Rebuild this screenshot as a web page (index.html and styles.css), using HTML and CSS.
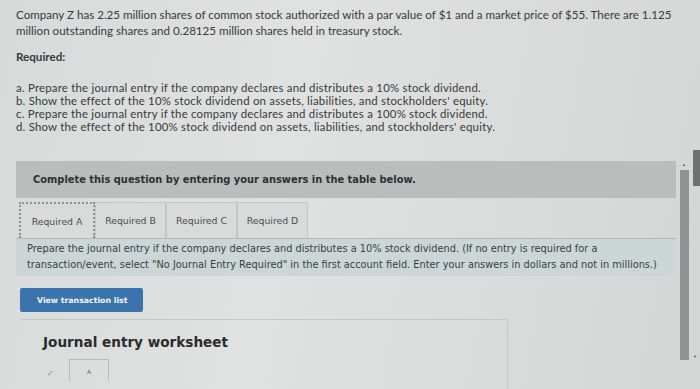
FILE: index.html
```html
<!DOCTYPE html>
<html>
<head>
<meta charset="utf-8">
<link rel="stylesheet" href="styles.css">
</head>
<body>
<div class="page">
  <div class="question">
    <p class="intro">Company Z has 2.25 million shares of common stock authorized with a par value of $1 and a market price of $55. There are 1.125 million outstanding shares and 0.28125 million shares held in treasury stock.</p>
    <p class="required">Required:</p>
    <ol class="parts">
      <li>a. Prepare the journal entry if the company declares and distributes a 10% stock dividend.</li>
      <li>b. Show the effect of the 10% stock dividend on assets, liabilities, and stockholders' equity.</li>
      <li>c. Prepare the journal entry if the company declares and distributes a 100% stock dividend.</li>
      <li>d. Show the effect of the 100% stock dividend on assets, liabilities, and stockholders' equity.</li>
    </ol>
  </div>
  <div class="work">
    <div class="banner">Complete this question by entering your answers in the table below.</div>
    <div class="tabs">
      <div class="tab active">Required A</div>
      <div class="tab">Required B</div>
      <div class="tab">Required C</div>
      <div class="tab">Required D</div>
    </div>
    <div class="instructions">Prepare the journal entry if the company declares and distributes a 10% stock dividend. (If no entry is required for a transaction/event, select "No Journal Entry Required" in the first account field. Enter your answers in dollars and not in millions.)</div>
    <button class="btn">View transaction list</button>
    <div class="worksheet">
      <h2 class="ws-title">Journal entry worksheet</h2>
      <div class="ws-row">
        <span class="check">✓</span>
        <div class="ws-tab">A</div>
      </div>
    </div>
  </div>
  <div class="scrollbar">
    <span class="arrow up">▲</span>
    <div class="thumb"></div>
    <span class="arrow down">▼</span>
  </div>
  <div class="edge"></div>
</div>
</body>
</html>
```
FILE: styles.css
```css
html, body {
  margin: 0;
  padding: 0;
}
body {
  width: 700px;
  height: 389px;
  overflow: hidden;
  background: linear-gradient(100deg, #d6dad9 0%, #dfe2e1 40%, #d9dcdb 70%, #d3d6d5 100%);
  color: #383a3b;
}
.page {
  position: relative;
  width: 700px;
  height: 389px;
}
.question {
  width: 660px;
  padding: 7px 0 0 16px;
  font-family: Lato, "Liberation Sans", sans-serif;
  font-size: 11.6px;
}
.intro {
  margin: 0;
  line-height: 16px;
}
.required {
  margin: 10px 0 0;
  line-height: 16px;
  font-weight: bold;
}
.parts {
  list-style: none;
  margin: 16px 0 0;
  padding: 0;
  line-height: 13px;
  font-size: 11.4px;
  letter-spacing: 0.22px;
}
.work {
  margin: 28px 24px 0 16px;
  font-family: "DejaVu Sans", Verdana, sans-serif;
}
.banner {
  background: #b9bdbc;
  height: 37px;
  display: flex;
  align-items: center;
  padding-left: 17px;
  font-weight: bold;
  font-size: 9.9px;
  color: #2e3133;
}
.tabs {
  display: flex;
  margin-top: 4px;
  padding-left: 3px;
  height: 36px;
}
.tab {
  box-sizing: border-box;
  width: 71px;
  height: 36px;
  display: flex;
  align-items: center;
  justify-content: center;
  font-size: 9.3px;
  color: #4a4d50;
  background: #d8dbda;
  border: 1px solid #c3c6c5;
  border-bottom: none;
}
.tab.active {
  width: 76px;
  border: 2px dotted #8d9190;
  border-bottom: none;
}
.instructions {
  background: #ccd6d7;
  border-top: 1px solid #b2bcbd;
  padding: 2px 10px 3px 11px;
  font-size: 9.8px;
  line-height: 16px;
  color: #3a3d40;
}
.btn {
  display: block;
  margin: 12px 0 0 4px;
  width: 123px;
  height: 24px;
  border: none;
  border-radius: 2px;
  background: #3b74ad;
  color: #f2f5f8;
  font-family: "DejaVu Sans", Verdana, sans-serif;
  font-weight: bold;
  font-size: 7.8px;
  text-align: left;
  padding-left: 17px;
}
.worksheet {
  margin: 7px 0 0 4px;
  width: 488px;
  height: 70px;
  border-top: 1px solid #c5c8c7;
  border-right: 1px solid #c5c8c7;
  box-sizing: border-box;
  padding-top: 12px;
}
.ws-title {
  margin: 0 0 0 23px;
  font-size: 13.6px;
  font-weight: bold;
  color: #2a2c2e;
  line-height: 20px;
}
.ws-row {
  display: flex;
  align-items: flex-end;
  margin-top: 7px;
  padding-left: 27px;
}
.check {
  font-size: 8px;
  color: #8a8d8e;
  margin-bottom: 3px;
  width: 22px;
}
.ws-tab {
  width: 40px;
  height: 22px;
  box-sizing: border-box;
  border: 1px solid #b8bbba;
  border-bottom: none;
  font-size: 6px;
  color: #666;
  text-align: center;
  padding-top: 8px;
}
.scrollbar {
  position: absolute;
  left: 678px;
  top: 162px;
  width: 12px;
  height: 208px;
  display: flex;
  flex-direction: column;
  align-items: center;
}
.arrow {
  font-size: 4px;
  color: #555;
  line-height: 6px;
}
.thumb {
  width: 9px;
  height: 190px;
  background: #8f9392;
  margin-top: 2px;
}
.arrow.down {
  position: absolute;
  left: 15px;
  top: 192px;
}
.edge {
  position: absolute;
  left: 693px;
  top: 150px;
  width: 7px;
  height: 36px;
  background: #6d7170;
}
```
